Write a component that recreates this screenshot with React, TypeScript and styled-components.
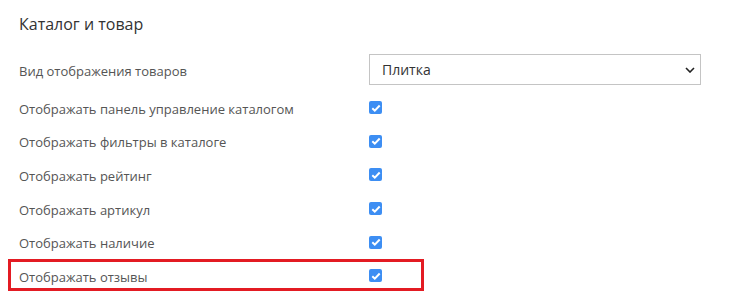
import styled, { createGlobalStyle } from "styled-components";
import { useState } from "react";

const GlobalStyle = createGlobalStyle`
  body {
    margin: 0;
    background: #ffffff;
    font-family: "Open Sans", "Noto Sans", sans-serif;
  }
`;

const options = [
  { id: "panel", label: "Отображать панель управление каталогом" },
  { id: "filters", label: "Отображать фильтры в каталоге" },
  { id: "rating", label: "Отображать рейтинг" },
  { id: "sku", label: "Отображать артикул" },
  { id: "stock", label: "Отображать наличие" },
  { id: "reviews", label: "Отображать отзывы", marked: true },
];

export default function App() {
  const [checked, setChecked] = useState<Record<string, boolean>>(
    Object.fromEntries(options.map((o) => [o.id, true]))
  );

  return (
    <>
      <GlobalStyle />
      <Section>
        <Title>Каталог и товар</Title>
        <SelectRow>
          <Label>Вид отображения товаров</Label>
          <SelectBox>
            <span>Плитка</span>
            <svg width="10" height="6" viewBox="0 0 10 6">
              <path d="M1 1l4 4 4-4" fill="none" stroke="#222" strokeWidth="1.6" />
            </svg>
          </SelectBox>
        </SelectRow>
        {options.map((o) => (
          <Row key={o.id} $marked={o.marked}>
            <Label>{o.label}</Label>
            <Check
              $on={checked[o.id]}
              onClick={() => setChecked({ ...checked, [o.id]: !checked[o.id] })}>
              {checked[o.id] && (
                <svg width="10" height="8" viewBox="0 0 10 8">
                  <path d="M1.3 4.2l2.5 2.4L8.7 1.5" fill="none" stroke="#fff" strokeWidth="2" />
                </svg>
              )}
            </Check>
          </Row>
        ))}
      </Section>
    </>
  );
}

const Section = styled.div`
  padding: 13px 0 0 19px;
  width: 700px;
`;

const Title = styled.h2`
  margin: 0 0 18px;
  font-size: 16px;
  font-weight: 400;
  line-height: 23px;
  color: #333;
`;

const Label = styled.div`
  width: 350px;
  font-size: 13px;
  color: #555;
  padding-top: 2px;
`;

const SelectRow = styled.div`
  display: flex;
  align-items: center;
  height: 31px;
  margin-bottom: 6px;
`;

const SelectBox = styled.div`
  box-sizing: border-box;
  width: 332px;
  height: 31px;
  border: 1px solid #c4c4c4;
  display: flex;
  align-items: center;
  justify-content: space-between;
  padding: 0 5px 0 12px;
  font-size: 14px;
  color: #333;
`;

const Row = styled.div<{ $marked?: boolean }>`
  position: relative;
  display: flex;
  align-items: center;
  height: 33.6px;

  &::after {
    content: "";
    display: ${(p) => (p.$marked ? "block" : "none")};
    position: absolute;
    left: -11px;
    top: 0;
    width: 416px;
    height: 32px;
    box-sizing: border-box;
    border: 3px solid #e31b23;
  }
`;

const Check = styled.span<{ $on?: boolean }>`
  box-sizing: border-box;
  width: 13px;
  height: 13px;
  border-radius: 2px;
  background: ${(p) => (p.$on ? "#3d8ef3" : "#fff")};
  border: ${(p) => (p.$on ? "none" : "1px solid #767676")};
  display: flex;
  align-items: center;
  justify-content: center;
  cursor: pointer;
`;
